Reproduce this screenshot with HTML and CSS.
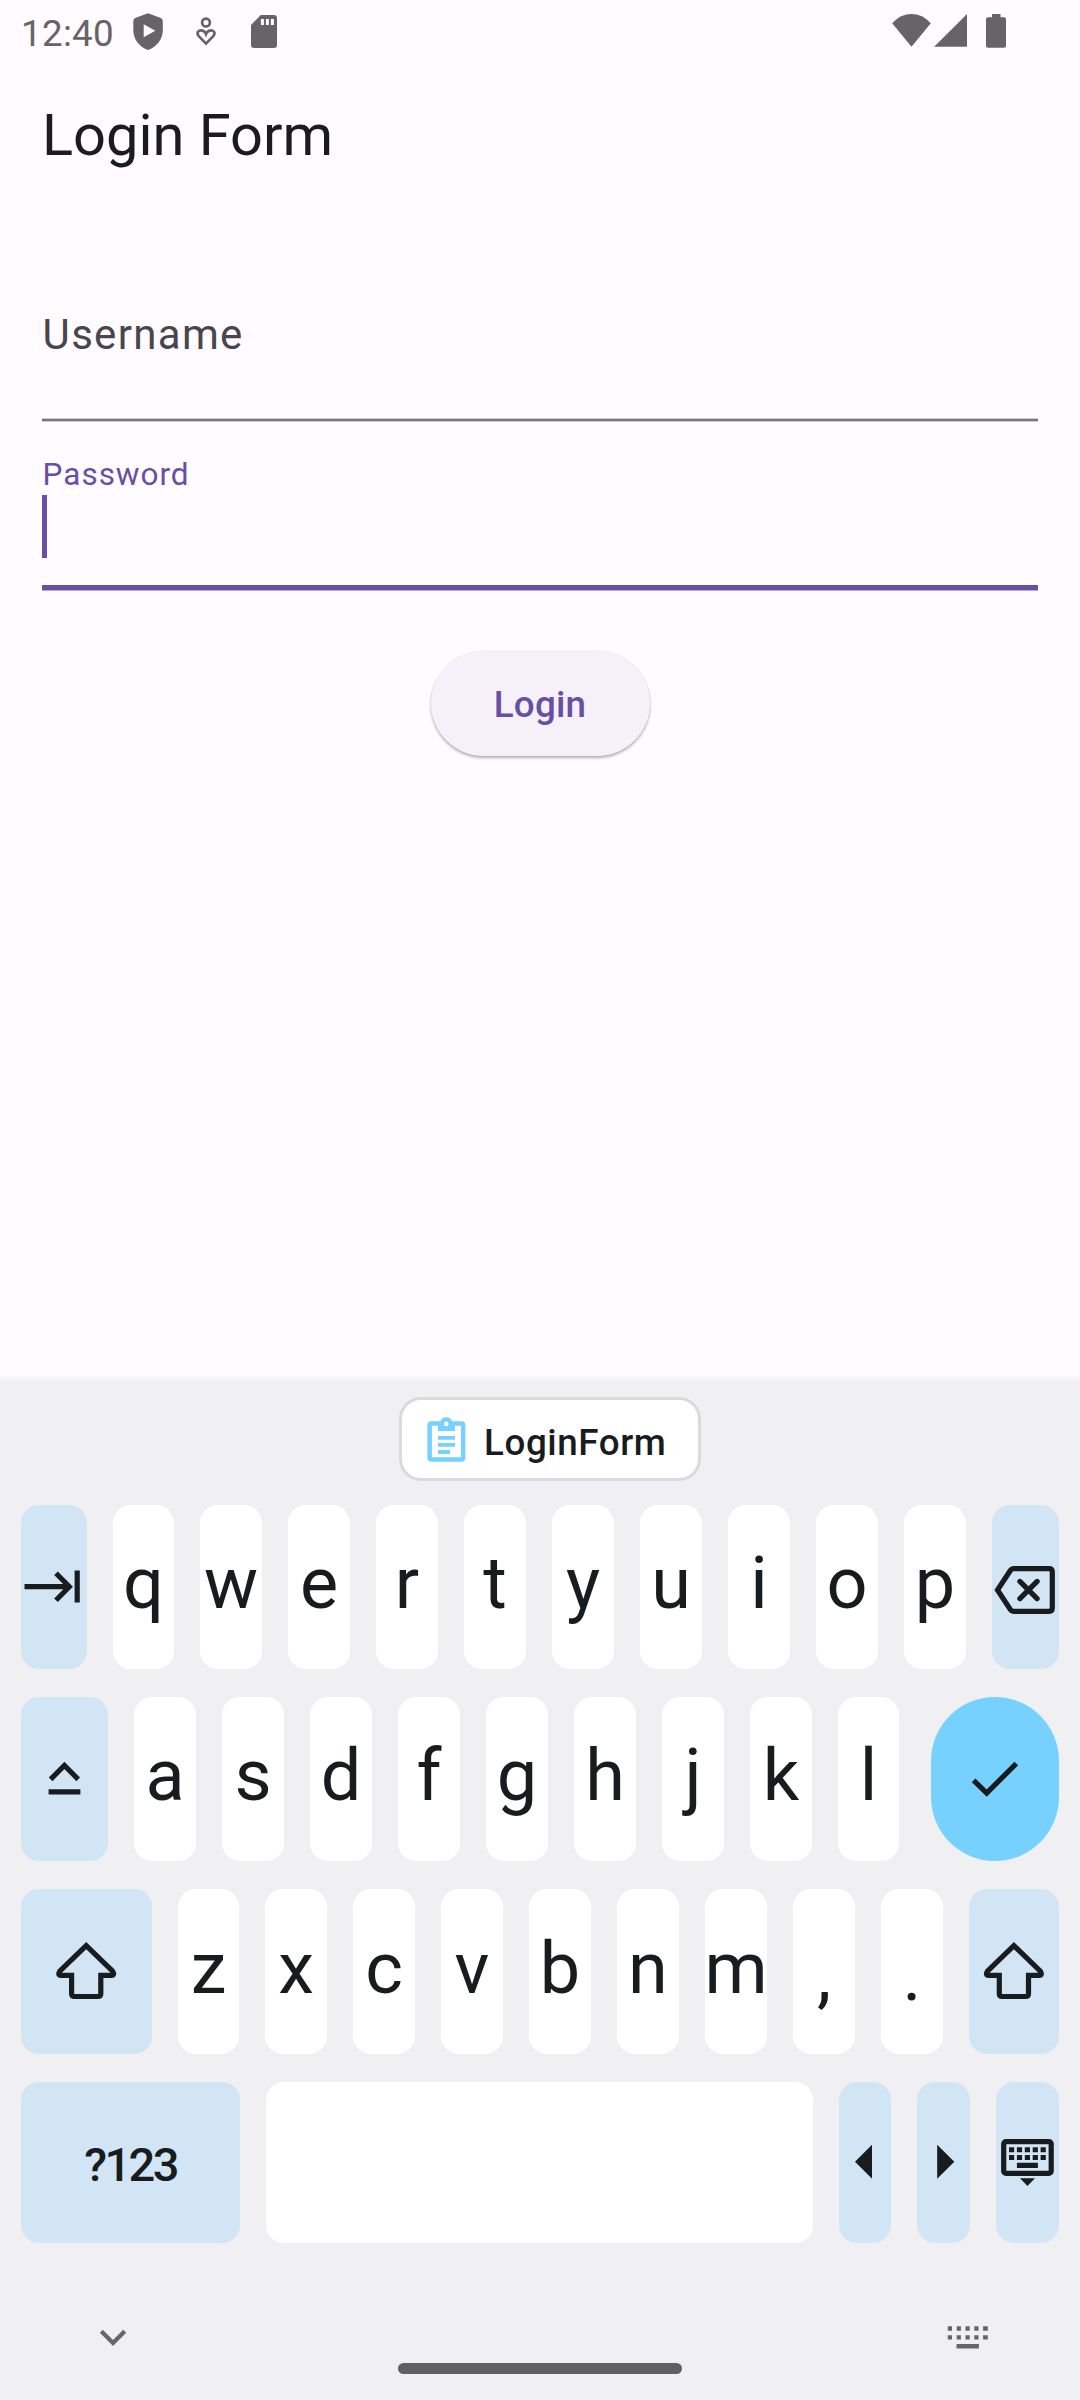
FILE: index.html
```html
<!DOCTYPE html>
<html lang="en">
<head>
<meta charset="utf-8">
<title>Login Form</title>
<link rel="stylesheet" href="styles.css">
</head>
<body>
<div class="screen">
  <header class="status">
    <span class="clock">12:40</span>
    <svg class="shield" width="30" height="38" viewBox="133 13 30 38"><path fill-rule="evenodd" d="M148 13.3L160.8 18Q162.8 18.8 162.8 21V30C162.8 39.5 156.500 47 148 50C139.500 47 133.300 39.500 133.300 30V21Q133.300 18.800 135.200 18ZM143.700 24.300V37.300L155.300 30.700Z"/></svg>
    <svg class="care" width="22" height="30" viewBox="195 17 22 30"><g fill="none" stroke="#676468" stroke-width="2.700"><circle cx="206" cy="22.500" r="3.900"/><path d="M206 43.600L199 36.400C196 33 198 30.300 201 30.300C203.500 30.300 205.200 32 206 34C206.800 32 208.500 30.300 211 30.300C214 30.300 216 33 213 36.400Z"/></g></svg>
    <svg class="card" width="26" height="33" viewBox="251 15 26 33"><path d="M260.700 15H274Q277 15 277 18V45Q277 48 274 48H254Q251 48 251 45V25Z"/><path class="slots" d="M260.900 19h3v6h-3zM265.900 19h3v6h-3zM270.900 19h3v6h-3z"/></svg>
    <span class="spacer"></span>
    <svg class="wifi" width="39" height="33" viewBox="892 14 39 33"><path d="M892.200 23.200Q900.500 14 911.500 14T930.800 23.200L911.500 46.700Z"/></svg>
    <svg class="signal" width="33" height="33" viewBox="934 14 33 33"><path d="M934.200 46.700L967 14V46.700Z"/></svg>
    <svg class="battery" width="20" height="34" viewBox="986 14 20 34"><path d="M992 14h8.500v3.300H1004Q1006 17.300 1006 19.300V45.800Q1006 47.800 1004 47.800H988Q986 47.800 986 45.800V19.300Q986 17.300 988 17.300H992Z"/></svg>
  </header>

  <main class="page">
    <h1 class="title">Login Form</h1>
    <div class="field field-idle"><label class="label">Username</label></div>
    <div class="field field-focus"><label class="label">Password</label><span class="cursor"></span></div>
    <button class="login" type="button">Login</button>
  </main>

  <section class="keyboard">
    <div class="suggestions">
      <div class="chip">
        <svg width="40" height="46" viewBox="427 1417 40 46"><g fill="#76d1ff"><path fill-rule="evenodd" d="M431.300 1421.300H440.500A6.200 6.200 0 0 1 452.100 1421.300H461.500Q465.400 1421.300 465.400 1425.300V1457.700Q465.400 1461.700 461.500 1461.700H431.300Q427.400 1461.700 427.400 1457.700V1425.300Q427.400 1421.300 431.300 1421.300ZM431.900 1425.700V1457.300H461V1425.700H455V1431H438V1425.700ZM446.300 1421.600A2.300 2.300 0 1 0 446.300 1426.200A2.300 2.300 0 1 0 446.300 1421.600Z"/><path d="M438 1436h17v3.700h-17zM438 1443h17v3.700h-17zM438 1450h12v3.900h-12z"/></g></svg>
        <span class="chip-text">LoginForm</span>
      </div>
    </div>
    <div class="row row-1">
      <div class="key fn"><svg viewBox="0 0 66 164"><path d="M3.500 81.700H48M35 68.200L48.300 81.700L35 95.200M56.200 65.500V97.500" class="line"/></svg></div>
      <div class="key">q</div><div class="key">w</div><div class="key">e</div><div class="key">r</div><div class="key">t</div><div class="key">y</div><div class="key">u</div><div class="key">i</div><div class="key">o</div><div class="key">p</div>
      <div class="key fn"><svg viewBox="0 0 67 164"><path class="line" d="M5.500 85L18.500 65.200Q19.600 63.600 21.500 63.600H57Q60.300 63.600 60.300 66.900V103.100Q60.300 106.400 57 106.400H21.500Q19.600 106.400 18.500 104.800ZM27.900 76.400L45.100 93.600M45.100 76.400L27.900 93.600" stroke-linecap="round"/></svg></div>
    </div>
    <div class="row row-2">
      <div class="key fn"><svg viewBox="0 0 87 164"><path class="line" d="M29.600 82.300L43.400 68.500L57.200 82.300M27.600 94.900H59.400"/></svg></div>
      <div class="key">a</div><div class="key">s</div><div class="key">d</div><div class="key">f</div><div class="key">g</div><div class="key">h</div><div class="key">j</div><div class="key">k</div><div class="key">l</div>
      <div class="key enter"><svg viewBox="0 0 128 164"><path class="line" d="M42.600 83.400L55.700 96L85.300 66.500"/></svg></div>
    </div>
    <div class="row row-3">
      <div class="key fn"><svg viewBox="0 0 131 165"><path class="line" d="M65.200 56.600L38.800 82.200Q36.300 86.400 40 86.400H50.600V104.700Q50.600 107.500 53.500 107.500H76.900Q79.800 107.500 79.800 104.700V86.400H90.400Q94.100 86.400 91.600 82.200Z"/></svg></div>
      <div class="key">z</div><div class="key">x</div><div class="key">c</div><div class="key">v</div><div class="key">b</div><div class="key">n</div><div class="key">m</div><div class="key punct">,</div><div class="key punct">.</div>
      <div class="key fn"><svg viewBox="20.300 0 90 165"><path class="line" d="M65.200 56.600L38.800 82.200Q36.300 86.400 40 86.400H50.600V104.700Q50.600 107.500 53.500 107.500H76.900Q79.800 107.500 79.800 104.700V86.400H90.400Q94.100 86.400 91.600 82.200Z"/></svg></div>
    </div>
    <div class="row row-4">
      <div class="key fn symbols">?123</div>
      <div class="key"></div>
      <div class="key fn"><svg viewBox="0 0 52 161"><path d="M16 79.800L33 62.800V96.800Z"/></svg></div>
      <div class="key fn"><svg viewBox="0 0 53 161"><path d="M37.300 79.800L20.200 62.800V96.800Z"/></svg></div>
      <div class="key fn"><svg viewBox="0 0 63 161"><rect class="line" x="7.700" y="59.600" width="47.500" height="31.800" rx="2.200"/><path d="M13 65.200h5.200v5h-5.200zM20.900 65.200h5.200v5h-5.200zM28.800 65.200h5.200v5h-5.200zM36.700 65.200h5.200v5h-5.200zM44.600 65.200h5.200v5h-5.200zM13 73h5.200v5h-5.200zM20.900 73h5.200v5h-5.200zM28.800 73h5.200v5h-5.200zM36.700 73h5.200v5h-5.200zM44.600 73h5.200v5h-5.200zM20.900 80.800h21v5.200h-21zM24 96.300H39L31.500 104Z"/></svg></div>
    </div>
    <nav class="navbar">
      <svg width="30" height="18" viewBox="98 2329 30 18"><path d="M101.300 2331.300L113 2343L124.700 2331.300" fill="none" stroke="#666" stroke-width="4.200"/></svg>
      <span class="handle"></span>
      <svg width="42" height="24" viewBox="947 2325 42 24"><path fill="#666" d="M947.800 2326.300h4.200v4.400h-4.200zM956.700 2326.300h4.200v4.400h-4.200zM965.500 2326.300h4.200v4.400h-4.200zM974.300 2326.300h4.200v4.400h-4.200zM983.100 2326.300h4.700v4.400h-4.700zM947.800 2335.200h4.200v4.400h-4.200zM956.700 2335.200h4.200v4.400h-4.200zM965.500 2335.200h4.200v4.400h-4.200zM974.300 2335.200h4.200v4.400h-4.200zM983.100 2335.200h4.700v4.400h-4.700zM956.500 2344h22.400v4.600h-22.400z"/></svg>
    </nav>
  </section>
</div>
</body>
</html>
```
FILE: styles.css
```css
* { box-sizing: border-box; }
body { margin: 0; background: #fffbff; font-family: Roboto, sans-serif; }
svg { display: block; flex: none; }
.screen { width: 1080px; height: 2400px; display: flex; flex-direction: column; overflow: hidden; }

.status { height: 63px; display: flex; align-items: flex-start; padding: 0 74px 0 21px; fill: #676468; }
.clock { width: 112px; font-size: 36.75px; line-height: 67px; letter-spacing: .3px; color: #676468; white-space: nowrap; }
.shield { margin-top: 13px; }
.care { margin: 17px 0 0 32px; }
.card { margin: 15px 0 0 34px; }
.slots { fill: #fffbff; }
.spacer { flex: 1; }
.wifi { margin-top: 14px; }
.signal { margin: 14px 0 0 3px; }
.battery { margin: 14px 0 0 19px; }

.page { height: 1318px; padding: 0 42px; display: flex; flex-direction: column; background: linear-gradient(to bottom, transparent 1312px, #f3f0f3 1318px); }
.title { margin: 0; height: 145px; font-size: 57.75px; line-height: 145px; font-weight: 400; color: #1c1b1f; }
.field { display: flex; flex-direction: column; align-items: flex-start; }
.field-idle { height: 214px; padding-top: 97px; background: linear-gradient(#cdc9d0 1px, #79747e 1px 3px, #cdc9d0 3px) 0 100% / 100% 4px no-repeat; }
.field-idle .label { padding-left: .6px; font-size: 42px; line-height: 60px; letter-spacing: 1.31px; color: #49454f; }
.field-focus { height: 169px; padding-top: 33px; background: linear-gradient(#6750a4 5px, #b5a8d2 5px) 0 100% / 100% 6px no-repeat; }
.field-focus .label { padding-left: .6px; font-size: 31.5px; line-height: 40px; letter-spacing: .98px; color: #6750a4; }
.cursor { width: 5px; height: 63px; background: #6750a4; }
.login { align-self: center; width: 219px; height: 105px; margin-top: 60px; padding: 1px 0 0; border: 0; border-radius: 53px; background: #f6f1f9; box-shadow: 0 2px 3px rgba(0,0,0,.3), 0 0 2px rgba(0,0,0,.06); font: 500 36.75px/103px Roboto, sans-serif; letter-spacing: .26px; color: #6750a4; }

.keyboard { height: 1019px; background: #f0f0f2; color: #191c1e; }
.suggestions { height: 124px; display: flex; justify-content: center; padding: 16px 0 0 20px; }
.chip { width: 302px; height: 84px; display: flex; align-items: flex-start; padding: 17px 0 0 25px; border: 3px solid #dadadb; border-radius: 22px; background: #fff; }
.chip-text { margin-left: 17px; font-size: 36.75px; line-height: 51px; font-weight: 500; letter-spacing: .6px; }

.row { display: grid; grid-template-rows: 100%; column-gap: 26px; padding: 0 21px; height: 164px; }
.row-1 { grid-template-columns: 66px 61px repeat(9, 62px) 67px; }
.row-2 { grid-template-columns: 87px repeat(8, 62px) 61px 134px; margin-top: 28px; }
.row-3 { grid-template-columns: 131px 61px repeat(8, 62px) 90px; margin-top: 28px; height: 165px; }
.row-4 { grid-template-columns: 219px 547px 52px 53px 63px; margin-top: 28px; height: 161px; }
.key { height: 100%; border-radius: 18px; background: #fff; display: flex; justify-content: center; font-size: 72px; line-height: 157px; }
.key svg { width: 100%; height: 100%; fill: #191c1e; }
.key .line { fill: none; stroke: #191c1e; stroke-width: 5.2px; }
.row-3 .key { line-height: 159px; }
.row-3 .punct { line-height: 174px; }
.fn { background: #d2e5f4; }
.enter { width: 128px; margin-left: 6px; border-radius: 64px; background: #76d1ff; }
.symbols { font-size: 47px; line-height: 166px; font-weight: 500; letter-spacing: -2.6px; }
.navbar { height: 150px; display: flex; justify-content: space-between; padding: 86px 91px 0 98px; }
.navbar svg:last-child { margin-top: -4px; }
.handle { width: 284px; height: 11px; margin-top: 34px; border-radius: 5.500px; background: #606060; margin-left: 5px; }
```
